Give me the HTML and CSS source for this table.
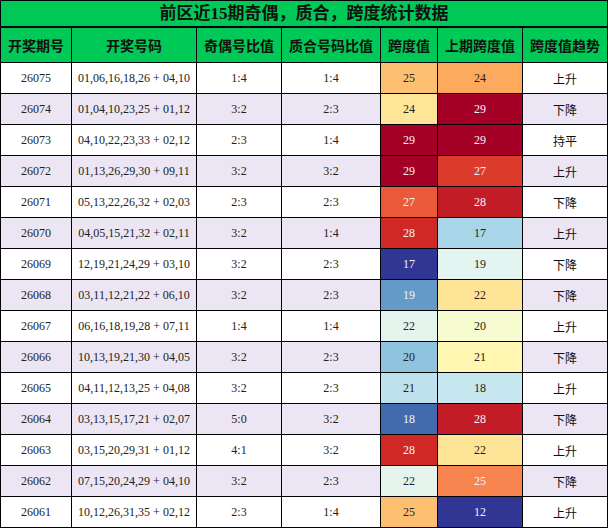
FILE: index.html
```html
<!DOCTYPE html>
<html lang="zh-CN">
<head>
<meta charset="utf-8">
<title>前区近15期奇偶，质合，跨度统计数据</title>
<link rel="stylesheet" href="styles.css">
</head>
<body>
<div class="board">
  <div class="title">前区近15期奇偶，质合，跨度统计数据</div>
  <div class="row head">
    <div class="cell">开奖期号</div><div class="cell">开奖号码</div><div class="cell">奇偶号比值</div><div class="cell">质合号码比值</div><div class="cell">跨度值</div><div class="cell">上期跨度值</div><div class="cell">跨度值趋势</div>
  </div>
  <div class="row">
    <div class="cell">26075</div><div class="cell">01,06,16,18,26 + 04,10</div><div class="cell">1:4</div><div class="cell">1:4</div><div class="cell heat" style="background:#fdbf71">25</div><div class="cell heat" style="background:#fdaa5f">24</div><div class="cell trend">上升</div>
  </div>
  <div class="row alt">
    <div class="cell">26074</div><div class="cell">01,04,10,23,25 + 01,12</div><div class="cell">3:2</div><div class="cell">2:3</div><div class="cell heat" style="background:#fee598">24</div><div class="cell heat light" style="background:#a50026">29</div><div class="cell trend">下降</div>
  </div>
  <div class="row">
    <div class="cell">26073</div><div class="cell">04,10,22,23,33 + 02,12</div><div class="cell">2:3</div><div class="cell">1:4</div><div class="cell heat light" style="background:#a50026">29</div><div class="cell heat light" style="background:#a50026">29</div><div class="cell trend">持平</div>
  </div>
  <div class="row alt">
    <div class="cell">26072</div><div class="cell">01,13,26,29,30 + 09,11</div><div class="cell">3:2</div><div class="cell">3:2</div><div class="cell heat light" style="background:#a50026">29</div><div class="cell heat light" style="background:#dc3b2c">27</div><div class="cell trend">上升</div>
  </div>
  <div class="row">
    <div class="cell">26071</div><div class="cell">05,13,22,26,32 + 02,03</div><div class="cell">2:3</div><div class="cell">2:3</div><div class="cell heat light" style="background:#ea593a">27</div><div class="cell heat light" style="background:#c21c27">28</div><div class="cell trend">下降</div>
  </div>
  <div class="row alt">
    <div class="cell">26070</div><div class="cell">04,05,15,21,32 + 02,11</div><div class="cell">3:2</div><div class="cell">1:4</div><div class="cell heat light" style="background:#cf2827">28</div><div class="cell heat" style="background:#a8d6e8">17</div><div class="cell trend">上升</div>
  </div>
  <div class="row">
    <div class="cell">26069</div><div class="cell">12,19,21,24,29 + 03,10</div><div class="cell">3:2</div><div class="cell">2:3</div><div class="cell heat light" style="background:#313695">17</div><div class="cell heat" style="background:#e4f4f1">19</div><div class="cell trend">下降</div>
  </div>
  <div class="row alt">
    <div class="cell">26068</div><div class="cell">03,11,12,21,22 + 06,10</div><div class="cell">3:2</div><div class="cell">2:3</div><div class="cell heat light" style="background:#649ac7">19</div><div class="cell heat" style="background:#fee496">22</div><div class="cell trend">下降</div>
  </div>
  <div class="row">
    <div class="cell">26067</div><div class="cell">06,16,18,19,28 + 07,11</div><div class="cell">1:4</div><div class="cell">1:4</div><div class="cell heat" style="background:#e5f5ee">22</div><div class="cell heat" style="background:#f6fcd0">20</div><div class="cell trend">上升</div>
  </div>
  <div class="row alt">
    <div class="cell">26066</div><div class="cell">10,13,19,21,30 + 04,05</div><div class="cell">3:2</div><div class="cell">2:3</div><div class="cell heat" style="background:#90c3dd">20</div><div class="cell heat" style="background:#fff6b1">21</div><div class="cell trend">下降</div>
  </div>
  <div class="row">
    <div class="cell">26065</div><div class="cell">04,11,12,13,25 + 04,08</div><div class="cell">3:2</div><div class="cell">2:3</div><div class="cell heat" style="background:#bde2ee">21</div><div class="cell heat" style="background:#c7e7f1">18</div><div class="cell trend">上升</div>
  </div>
  <div class="row alt">
    <div class="cell">26064</div><div class="cell">03,13,15,17,21 + 02,07</div><div class="cell">5:0</div><div class="cell">3:2</div><div class="cell heat light" style="background:#426baf">18</div><div class="cell heat light" style="background:#c21c27">28</div><div class="cell trend">下降</div>
  </div>
  <div class="row">
    <div class="cell">26063</div><div class="cell">03,15,20,29,31 + 01,12</div><div class="cell">4:1</div><div class="cell">3:2</div><div class="cell heat light" style="background:#cf2827">28</div><div class="cell heat" style="background:#fee496">22</div><div class="cell trend">上升</div>
  </div>
  <div class="row alt">
    <div class="cell">26062</div><div class="cell">07,15,20,24,29 + 04,10</div><div class="cell">3:2</div><div class="cell">2:3</div><div class="cell heat" style="background:#e5f5ee">22</div><div class="cell heat light" style="background:#f7844e">25</div><div class="cell trend">下降</div>
  </div>
  <div class="row">
    <div class="cell">26061</div><div class="cell">10,12,26,31,35 + 02,12</div><div class="cell">2:3</div><div class="cell">1:4</div><div class="cell heat" style="background:#fdbf71">25</div><div class="cell heat light" style="background:#313695">12</div><div class="cell trend">上升</div>
  </div>
</div>
</body>
</html>
```

FILE: styles.css
```css
html, body {
  margin: 0;
  padding: 0;
  background: #ffffff;
}

.board {
  width: 608px;
  height: 528px;
  box-sizing: border-box;
  padding: 1px;
  background: #000000;
  display: flex;
  flex-direction: column;
  gap: 1px;
}

.title {
  height: 25px;
  margin-bottom: 1px;
  background: #00c957;
  color: #111111;
  font-family: "Liberation Serif", "Noto Sans CJK SC", sans-serif;
  font-weight: bold;
  font-size: 17px;
  line-height: 25px;
  text-align: center;
}

.row {
  display: grid;
  grid-template-columns: 70px 124px 84px 98px 56px 84px 84px;
  gap: 1px;
  height: 30px;
}

.cell {
  background: #ffffff;
  color: #222222;
  font-family: "Liberation Serif", "Noto Sans CJK SC", serif;
  font-size: 12px;
  display: flex;
  align-items: center;
  justify-content: center;
  white-space: nowrap;
}

.row.alt .cell {
  background: #ece6f4;
}

.row.head {
  height: 34px;
}

.row.head .cell {
  background: #00c957;
  color: #111111;
  font-family: "Noto Sans CJK SC", sans-serif;
  font-weight: bold;
  font-size: 14px;
}

.trend {
  font-family: "Noto Sans CJK SC", sans-serif;
  color: #111111;
}

.heat {
  color: #222222;
}

.heat.light {
  color: #f4f4f4;
}
```
